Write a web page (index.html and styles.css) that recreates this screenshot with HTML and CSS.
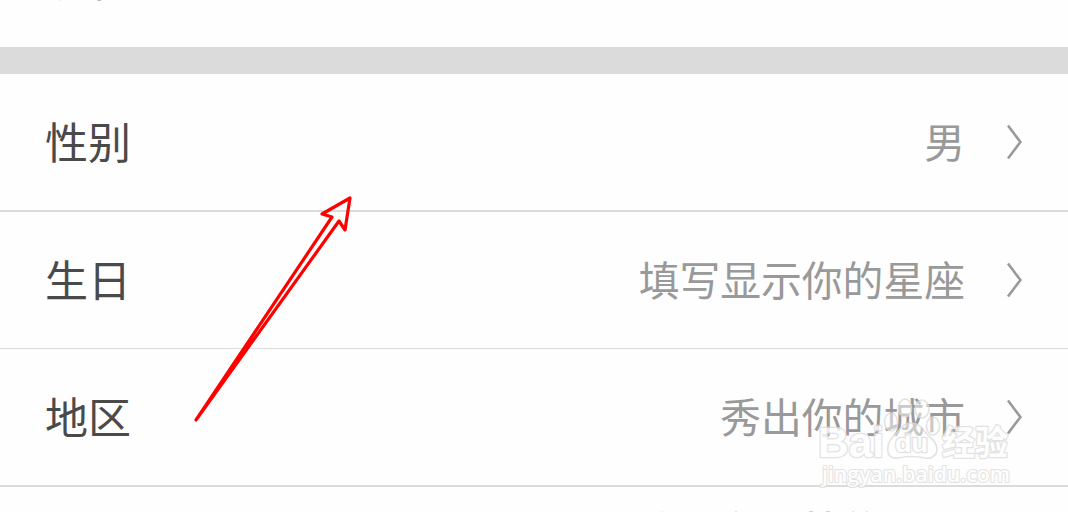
FILE: index.html
```
<!DOCTYPE html>
<html lang="zh-CN">
<head>
    <meta charset="UTF-8">
    <title>个人资料</title>
    <link rel="stylesheet" href="styles.css">
</head>
<body>
<div class="page">
    <div class="gap"></div>
    <ul class="list">
        <li class="item">
            <span class="label">性别</span>
            <span class="value">男</span>
            <svg class="more" viewBox="0 0 18 36"><path d="M2 1.5L14.4 18L2 34.5"/></svg>
        </li>
        <li class="item thin">
            <span class="label">生日</span>
            <span class="value">填写显示你的星座</span>
            <svg class="more" viewBox="0 0 18 36"><path d="M2 1.5L14.4 18L2 34.5"/></svg>
        </li>
        <li class="item">
            <span class="label">地区</span>
            <span class="value">秀出你的城市</span>
            <svg class="more" viewBox="0 0 18 36"><path d="M2 1.5L14.4 18L2 34.5"/></svg>
        </li>
    </ul>

    <!-- rows cut off at the top and bottom edge -->
    <svg class="cut" viewBox="0 0 1068 512">
        <path d="M97.5 .5h3.5" stroke="#bbb"/>
        <path d="M60 .5h1M662 511.5h1M735 511.5h2M852 511.5h2M866 511.5h2" stroke="#e4e4e4"/>
        <path d="M809 511.5h4M826 511.5h4" stroke="#d4d4d4"/>
    </svg>

    <svg class="arrow" viewBox="0 0 170 240">
        <path d="M16 230L152 27L142 24L170 8L165 40L159 31Z"/>
    </svg>

    <svg class="mark" viewBox="0 0 200 100">
        <g class="paw">
            <ellipse cx="81" cy="32" rx="6.5" ry="9"/>
            <ellipse cx="95" cy="18" rx="6.5" ry="9"/>
            <ellipse cx="112" cy="19" rx="7" ry="9"/>
            <ellipse cx="123" cy="36" rx="6.5" ry="9"/>
            <path d="M101 33C109 33 112 38 116 43C120 48 127 51 127 59C127 66 121 69 115 68C106 66 97 66 88 68C79 69 77 63 78 56C79 49 85 45 89 40C92 36 95 33 101 33Z"/>
        </g>
        <text class="logo" x="8" y="67" textLength="66" lengthAdjust="spacingAndGlyphs">Bai</text>
        <text class="du" x="85" y="62" textLength="33" lengthAdjust="spacingAndGlyphs">du</text>
        <text class="cn" x="132" y="65" textLength="66" lengthAdjust="spacingAndGlyphs">经验</text>
        <text class="site" x="12" y="92" textLength="188" lengthAdjust="spacingAndGlyphs">jingyan.baidu.com</text>
    </svg>
</div>
</body>
</html>
```
FILE: styles.css
```
*{
    box-sizing: border-box;
    margin: 0;
    padding: 0;
}
body{
    background: #fefefe;
    font-family: "Liberation Sans","Noto Sans CJK SC",sans-serif;
}
.page{
    position: relative;
    height: 512px;
    padding-top: 47px;
    overflow: hidden;
}
.gap{
    height: 27px;
    background: #dbdbdb;
}
.list{
    list-style: none;
}
.item{
    display: flex;
    align-items: center;
    height: 138px;
    padding: 0 44px 0 45px;
    border-bottom: 2px solid #dbdbdb;
}
.item.thin{
    height: 137px;
    border-bottom-width: 1px;
}
.label{
    padding-top: 4px;
    font-size: 43px;
    line-height: 60px;
    color: #4a4a4a;
}
.value{
    margin-left: auto;
    padding-top: 4px;
    font-size: 40.8px;
    line-height: 60px;
    color: #999;
}
.more{
    width: 18px;
    height: 36px;
    margin-left: 41px;
    fill: none;
    stroke: #999;
    stroke-width: 2.6;
}
.cut{
    position: absolute;
    left: 0;
    top: 0;
    width: 1068px;
    height: 512px;
}
.arrow{
    position: absolute;
    left: 180px;
    top: 190px;
    width: 170px;
    height: 240px;
    overflow: visible;
    fill: none;
    stroke: #f00;
    stroke-width: 3.2;
    stroke-linejoin: round;
}
/* watermark */
.mark{
    position: absolute;
    left: 810px;
    top: 390px;
    width: 200px;
    height: 100px;
    overflow: visible;
    fill: #fff;
    stroke: #dcdcdc;
    stroke-width: 2.6;
    stroke-linejoin: round;
    paint-order: stroke;
    opacity: .8;
}
.paw{
    fill: rgba(255,255,255,.6);
    stroke-width: 1.6;
    paint-order: normal;
}
.logo{
    font: bold 43px "Liberation Sans",sans-serif;
}
.du{
    font: bold 25px "Liberation Sans",sans-serif;
}
.cn{
    font: bold 34px "Noto Sans CJK SC",sans-serif;
}
.site{
    font: 600 22px "Open Sans","Noto Sans",sans-serif;
    stroke-width: 2.2;
}
```
